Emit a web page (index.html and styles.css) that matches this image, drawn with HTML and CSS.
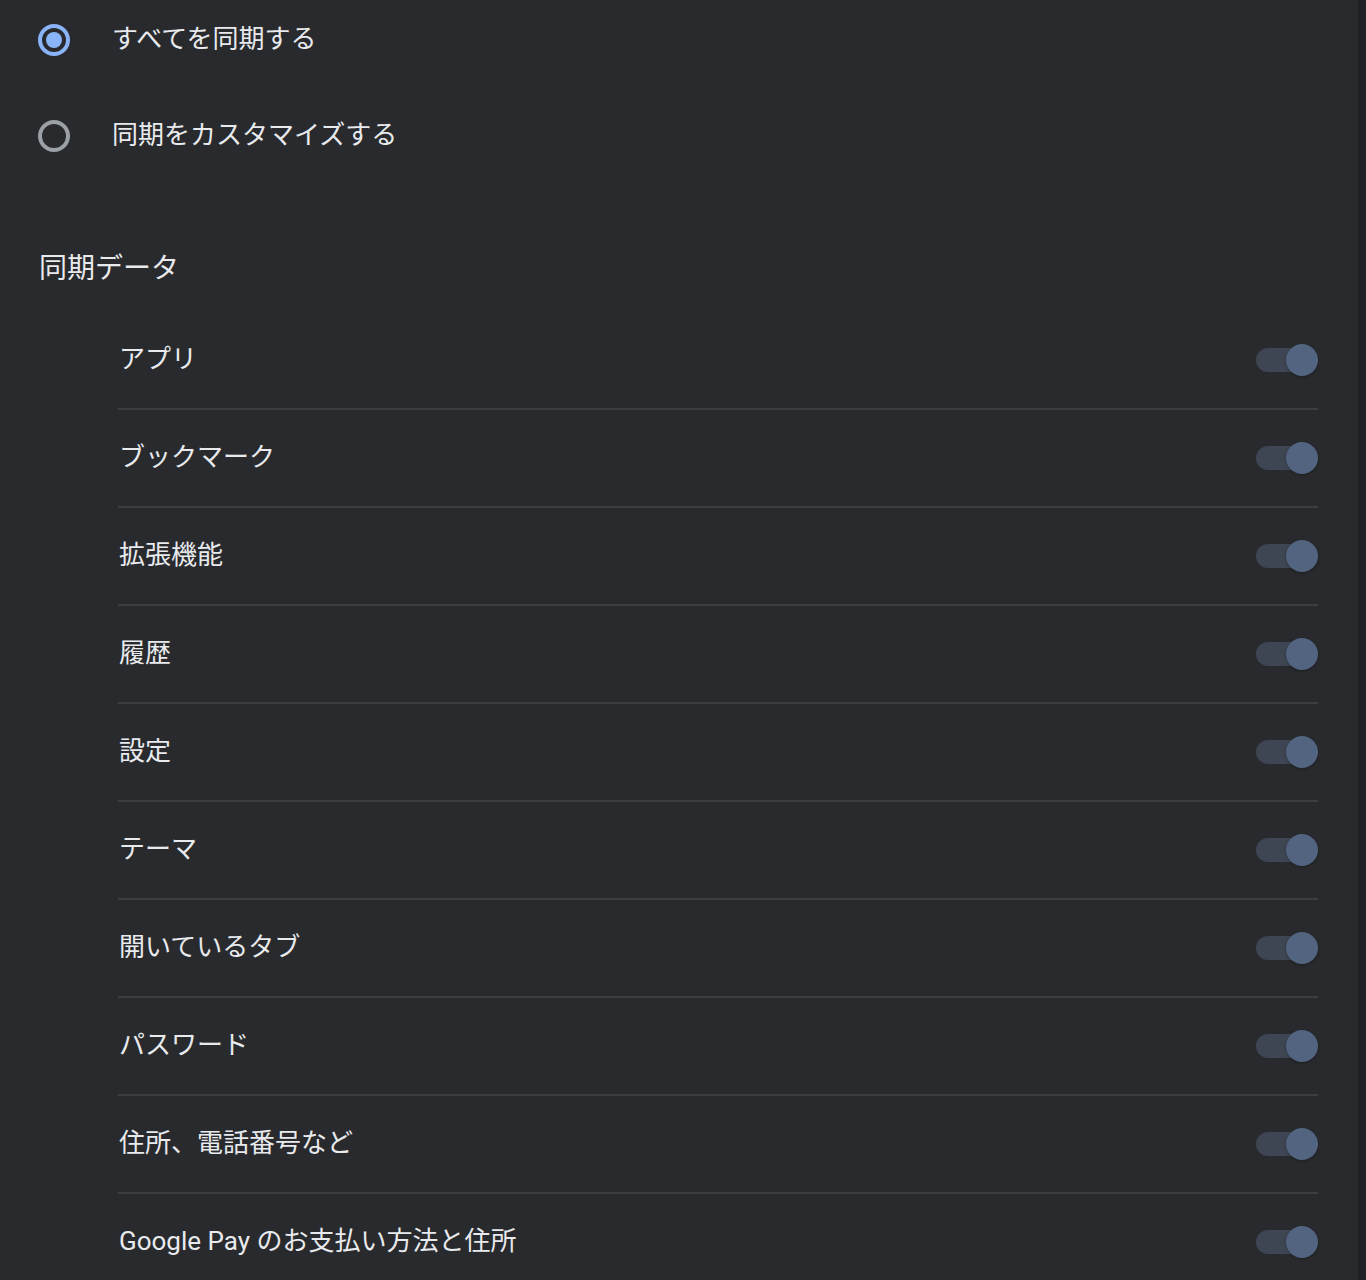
FILE: index.html
```html
<!DOCTYPE html>
<html lang="ja">
<head>
<meta charset="utf-8">
<title>同期</title>
<link rel="stylesheet" href="styles.css">
</head>
<body>
<div class="page">
  <main class="content">
    <div class="radio-group">
      <div class="radio-row">
        <span class="radio checked"><span class="dot"></span></span>
        <span class="radio-label">すべてを同期する</span>
      </div>
      <div class="radio-row">
        <span class="radio"></span>
        <span class="radio-label">同期をカスタマイズする</span>
      </div>
    </div>
    <h2 class="heading">同期データ</h2>
    <ul class="list">
      <li class="item"><span class="label">アプリ</span><span class="toggle"><span class="knob"></span></span></li>
      <li class="item"><span class="label">ブックマーク</span><span class="toggle"><span class="knob"></span></span></li>
      <li class="item"><span class="label">拡張機能</span><span class="toggle"><span class="knob"></span></span></li>
      <li class="item"><span class="label">履歴</span><span class="toggle"><span class="knob"></span></span></li>
      <li class="item"><span class="label">設定</span><span class="toggle"><span class="knob"></span></span></li>
      <li class="item"><span class="label">テーマ</span><span class="toggle"><span class="knob"></span></span></li>
      <li class="item"><span class="label">開いているタブ</span><span class="toggle"><span class="knob"></span></span></li>
      <li class="item"><span class="label">パスワード</span><span class="toggle"><span class="knob"></span></span></li>
      <li class="item"><span class="label">住所、電話番号など</span><span class="toggle"><span class="knob"></span></span></li>
      <li class="item"><span class="label">Google Pay のお支払い方法と住所</span><span class="toggle"><span class="knob"></span></span></li>
    </ul>
  </main>
  <div class="scroll-strip"></div>
</div>
</body>
</html>
```
FILE: styles.css
```css
* { box-sizing: border-box; }
html, body {
  margin: 0;
  padding: 0;
  background: #292a2d;
}
body {
  font-family: Roboto, "Noto Sans CJK JP", sans-serif;
  color: #e8eaed;
  height: 1280px;
  overflow: hidden;
}
.page {
  display: flex;
  height: 1280px;
}
.content {
  flex: 1;
  padding: 0 40px 0 38px;
}
.scroll-strip {
  width: 8px;
  background: #202124;
}
.radio-group {
  display: flex;
  flex-direction: column;
  gap: 16px;
}
.radio-row {
  height: 80px;
  display: flex;
  align-items: center;
  gap: 42px;
}
.radio {
  width: 32px;
  height: 32px;
  border-radius: 50%;
  border: 4px solid #9aa0a6;
  display: flex;
  align-items: center;
  justify-content: center;
  flex-shrink: 0;
}
.radio.checked {
  border-color: #8ab4f8;
}
.radio .dot {
  width: 16px;
  height: 16px;
  border-radius: 50%;
  background: #8ab4f8;
}
.radio-label {
  font-size: 26px;
  line-height: 40px;
  margin-top: -2px;
}
.heading {
  margin: 73px 0 0 1px;
  font-size: 28px;
  font-weight: 400;
  line-height: 40px;
}
.list {
  list-style: none;
  margin: 21px 0 0 80px;
  padding: 0;
}
.item {
  height: 98px;
  display: flex;
  align-items: center;
  justify-content: space-between;
  border-top: 2px solid #3d3e41;
}
.item:first-child {
  border-top-color: transparent;
}
.label {
  font-size: 26px;
  line-height: 40px;
  margin-top: -2px;
  padding-left: 1px;
}
.toggle {
  position: relative;
  width: 62px;
  height: 32px;
  flex-shrink: 0;
}
.toggle::before {
  content: "";
  position: absolute;
  left: 0;
  top: 4px;
  width: 60px;
  height: 24px;
  border-radius: 12px;
  background: #3e4654;
}
.knob {
  position: absolute;
  right: 0;
  top: 0;
  width: 32px;
  height: 32px;
  border-radius: 50%;
  background: #536481;
  box-shadow: 0 1px 3px rgba(0,0,0,0.3);
}
```
